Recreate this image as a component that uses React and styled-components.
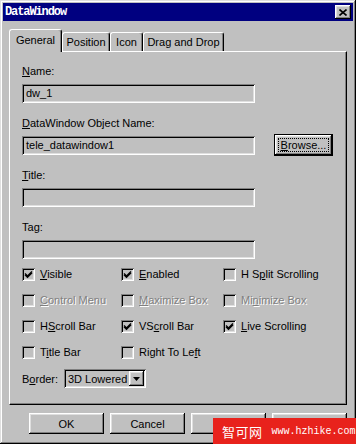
import styled, { createGlobalStyle, css } from "styled-components"

const Global = createGlobalStyle`
  body {
    margin: 0;
    background: #c0c0c0;
    font-family: "Liberation Sans", Arial, sans-serif;
    font-size: 11px;
  }
`

const raised = css`
  box-shadow: inset -1px -1px #000, inset 1px 1px #fff, inset -2px -2px #808080, inset 2px 2px #dfdfdf;
`

const sunken = css`
  box-shadow: inset 1px 1px #808080, inset -1px -1px #fff, inset 2px 2px #000, inset -2px -2px #dfdfdf;
`

function Mn({ children }) {
  return <Under>{children}</Under>
}

function Check({ checked }) {
  return (
    <svg width="9" height="9" viewBox="0 0 9 9">
      {checked && <path d="M1 3.5 L3.5 6 L8 1.5 M1 4.7 L3.5 7.2 L8 2.7" stroke="#000" strokeWidth="1.4" fill="none" />}
    </svg>
  )
}

function Option({ label, checked, disabled }) {
  return (
    <OptionRow>
      <Box $disabled={disabled}>
        <Check checked={checked} />
      </Box>
      <Text $disabled={disabled}>{label}</Text>
    </OptionRow>
  )
}

function App() {
  return (
    <>
      <Global />
      <Window>
        <TitleBar>
          <TitleText>DataWindow</TitleText>
          <CloseButton>
            <svg width="8" height="7" viewBox="0 0 8 7">
              <path d="M0.5 0.5 L7.5 6.5 M7.5 0.5 L0.5 6.5" stroke="#000" strokeWidth="1.6" />
            </svg>
          </CloseButton>
        </TitleBar>

        <Body>
          <TabRow>
            <Tab $active $w={53}>General</Tab>
            <Tab $w={48}>Position</Tab>
            <Tab $w={33}>Icon</Tab>
            <Tab $w={81}>Drag and Drop</Tab>
          </TabRow>

          <Panel>
            <Field>
              <Label><Mn>N</Mn>ame:</Label>
              <Input>dw_1</Input>
            </Field>
            <Field>
              <Label><Mn>D</Mn>ataWindow Object Name:</Label>
              <InputRow>
                <Input>tele_datawindow1</Input>
                <BrowseButton>
                  <Focus><Mn>B</Mn>rowse...</Focus>
                </BrowseButton>
              </InputRow>
            </Field>
            <Field>
              <Label><Mn>T</Mn>itle:</Label>
              <Input />
            </Field>
            <Field>
              <Label>Ta<Mn>g</Mn>:</Label>
              <Input />
            </Field>

            <Options>
              <Option checked label={<><Mn>V</Mn>isible</>} />
              <Option checked label={<><Mn>E</Mn>nabled</>} />
              <Option label={<>H S<Mn>p</Mn>lit Scrolling</>} />
              <Option disabled label={<><Mn>C</Mn>ontrol Menu</>} />
              <Option disabled label={<><Mn>M</Mn>aximize Box</>} />
              <Option disabled label={<>Mi<Mn>n</Mn>imize Box</>} />
              <Option label={<>H<Mn>S</Mn>croll Bar</>} />
              <Option checked label={<>VS<Mn>c</Mn>roll Bar</>} />
              <Option checked label={<><Mn>L</Mn>ive Scrolling</>} />
              <Option label={<>T<Mn>i</Mn>tle Bar</>} />
              <Option label={<>Right To Le<Mn>f</Mn>t</>} />
            </Options>

            <BorderRow>
              <BorderLabel>B<Mn>o</Mn>rder:</BorderLabel>
              <Select>
                <span>3D Lowered</span>
                <DropButton>
                  <svg width="7" height="4" viewBox="0 0 7 4">
                    <path d="M0 0 H7 L3.5 4 Z" fill="#000" />
                  </svg>
                </DropButton>
              </Select>
            </BorderRow>
          </Panel>

          <ButtonRow>
            <Button>OK</Button>
            <Button>Cancel</Button>
            <Button>Apply</Button>
            <Button>Help</Button>
          </ButtonRow>
        </Body>

        <Watermark>
          <WmCjk>智可网</WmCjk>
          <WmUrl>www.hzhike.com</WmUrl>
        </Watermark>
      </Window>
    </>
  )
}

export default App

const Window = styled.div`
  position: relative;
  box-sizing: border-box;
  width: 356px;
  height: 444px;
  padding: 3px;
  background: #c0c0c0;
  box-shadow: inset -1px -1px #000, inset 1px 1px #dfdfdf, inset -2px -2px #808080, inset 2px 2px #fff;
  overflow: hidden;
`

const TitleBar = styled.div`
  height: 18px;
  background: #000080;
  display: flex;
  align-items: center;
  justify-content: space-between;
  padding: 0 2px;
`

const TitleText = styled.span`
  color: #fff;
  font-family: "Liberation Mono", "DejaVu Sans Mono", monospace;
  font-weight: bold;
  font-size: 12px;
  letter-spacing: -1.1px;
`

const CloseButton = styled.div`
  width: 16px;
  height: 14px;
  background: #c0c0c0;
  display: flex;
  align-items: center;
  justify-content: center;
  ${raised}
`

const Body = styled.div`
  padding: 8px 6px 0;
`

const TabRow = styled.div`
  display: flex;
  align-items: flex-end;
  height: 22px;
`

const Tab = styled.div`
  box-sizing: border-box;
  width: ${(p) => p.$w}px;
  height: ${(p) => (p.$active ? 23 : 19)}px;
  margin-bottom: ${(p) => (p.$active ? -1 : 0)}px;
  position: relative;
  z-index: ${(p) => (p.$active ? 1 : 0)};
  display: flex;
  align-items: center;
  justify-content: center;
  padding-bottom: ${(p) => (p.$active ? 2 : 0)}px;
  background: #c0c0c0;
  border-top: 1px solid #fff;
  border-left: 1px solid #fff;
  border-right: 1px solid #000;
  border-radius: 3px 3px 0 0;
  box-shadow: inset -1px 0 #808080;
  white-space: nowrap;
  font-size: 11px;
`

const Panel = styled.div`
  box-sizing: border-box;
  height: 354px;
  padding: 13px 12px;
  border-top: 1px solid #fff;
  border-left: 1px solid #fff;
  border-right: 1px solid #000;
  border-bottom: 1px solid #000;
  box-shadow: inset -1px -1px #808080;
  display: flex;
  flex-direction: column;
`

const Field = styled.div`
  display: flex;
  flex-direction: column;
  margin-bottom: 14px;
  &:nth-of-type(4) {
    margin-bottom: 9px;
  }
`

const Label = styled.div`
  line-height: 13px;
  height: 13px;
  margin-bottom: 6px;
`

const Under = styled.span`
  text-decoration: underline;
  text-underline-offset: 1px;
`

const InputRow = styled.div`
  display: flex;
  align-items: flex-start;
  gap: 19px;
  height: 19px;
`

const Input = styled.div`
  box-sizing: border-box;
  width: 233px;
  height: 19px;
  padding: 3px 4px;
  line-height: 13px;
  background: #c0c0c0;
  ${sunken}
`

const BrowseButton = styled.div`
  box-sizing: border-box;
  width: 59px;
  height: 22px;
  margin-top: -2px;
  border: 1px solid #000;
  background: #c0c0c0;
  display: flex;
  align-items: center;
  justify-content: center;
  ${raised}
`

const Focus = styled.span`
  border: 1px dotted #000;
  padding: 0 2px;
  line-height: 12px;
`

const Options = styled.div`
  display: grid;
  grid-template-columns: 99px 102px 1fr;
  grid-auto-rows: 13px;
  row-gap: 13px;
`

const OptionRow = styled.div`
  display: flex;
  align-items: center;
  gap: 5px;
  white-space: nowrap;
`

const Box = styled.div`
  box-sizing: border-box;
  width: 13px;
  height: 13px;
  flex: none;
  background: #c0c0c0;
  display: flex;
  align-items: center;
  justify-content: center;
  ${sunken}
`

const Text = styled.span`
  line-height: 13px;
  color: ${(p) => (p.$disabled ? "#808080" : "#000")};
  text-shadow: ${(p) => (p.$disabled ? "1px 1px 0 #fff" : "none")};
`

const BorderRow = styled.div`
  display: flex;
  align-items: center;
  margin-top: 10px;
`

const BorderLabel = styled.span`
  width: 42px;
`

const Select = styled.div`
  box-sizing: border-box;
  width: 82px;
  height: 19px;
  padding: 2px 2px 2px 4px;
  display: flex;
  align-items: center;
  justify-content: space-between;
  background: #c0c0c0;
  ${sunken}
`

const DropButton = styled.div`
  width: 15px;
  height: 15px;
  background: #c0c0c0;
  display: flex;
  align-items: center;
  justify-content: center;
  ${raised}
`

const ButtonRow = styled.div`
  display: flex;
  justify-content: flex-end;
  gap: 6px;
  margin-top: 8px;
`

const Button = styled.div`
  width: 75px;
  height: 21px;
  display: flex;
  align-items: center;
  justify-content: center;
  background: #c0c0c0;
  ${raised}
`

const Watermark = styled.div`
  position: absolute;
  right: 0;
  bottom: 0;
  width: 143px;
  height: 26px;
  background: #e8221c;
  display: flex;
  align-items: center;
  padding-left: 9px;
  box-sizing: border-box;
  gap: 9px;
  color: #fff;
`

const WmCjk = styled.span`
  font-family: "Noto Sans CJK SC", sans-serif;
  font-size: 13px;
  letter-spacing: 0.5px;
`

const WmUrl = styled.span`
  font-family: "Liberation Mono", monospace;
  font-size: 10px;
`
